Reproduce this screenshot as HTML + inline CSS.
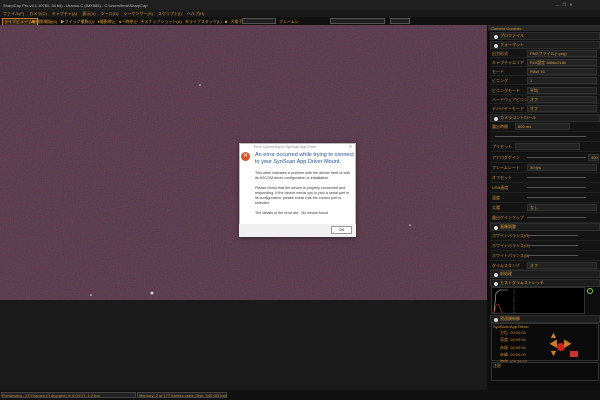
<!DOCTYPE html><html><head><meta charset="utf-8"><style>
*{margin:0;padding:0;box-sizing:border-box}
body{width:600px;height:400px;overflow:hidden;background:#1b1b1b;font-family:"Liberation Sans","Noto Sans CJK JP",sans-serif;position:relative;color:#d89a3a}
.a{position:absolute}
.t{font-size:4px;white-space:nowrap}
.row{position:absolute;left:490px;width:110px;height:9px;background:#141414;border-bottom:1px solid #222}
.lbl{position:absolute;left:2px;top:2px;font-size:4px;color:#d8923a;white-space:nowrap}
.fld{position:absolute;left:37px;right:3px;top:1px;height:7px;background:#222;border:1px solid #333;font-size:4px;color:#d8a050;padding-left:2px;line-height:5px}
.hdr{position:absolute;left:490px;width:110px;height:8px;background:#1e1e1e;border:1px solid #2e2e2e;font-size:4px;color:#e0a040;line-height:6px;padding-left:9px}
.hdr:before{content:"";position:absolute;left:3px;top:1.5px;width:4px;height:4px;border-radius:50%;background:#ddd}
.sl{position:absolute;left:37px;right:14px;top:4px;height:1px;background:#555}
</style></head><body>
<div class="a" style="left:0;top:0;width:600px;height:10px;background:#202020"></div>
<div class="a t" style="left:3px;top:3px;color:#bbb">SharpCap Pro v4.1.10780, 64 bit) - Uranus-C (IMX585) - C:\Users\fmsl\SharpCap</div>
<div class="a t" style="left:555px;top:2px;color:#aaa">—&nbsp;&nbsp;&nbsp;❐&nbsp;&nbsp;&nbsp;✕</div>
<div class="a" style="left:0;top:10px;width:600px;height:7px;background:#1a1a1a"></div>
<div class="a t" style="left:3px;top:11px;color:#d89a3a;word-spacing:4px">ファイル(F) カメラ(C) キャプチャ(A) 表示(V) ツール(O) シーケンサー(S) スクリプト(I) ヘルプ(H)</div>
<div class="a" style="left:0;top:17px;width:600px;height:8px;background:#111"></div>
<div class="a t" style="left:2px;top:18px;background:#3a2a18;border:1px solid #c07a2a;color:#e0a040;padding:0 1px">ライブビュー (W)</div>
<div class="a t" style="left:32px;top:19px;color:#d89a3a;word-spacing:2px">▶撮影開始(S) ▶クイック撮影(Q) ●撮影停止 ●一時停止 ▣スナップショット(A) ▣ライブスタック(L) ■ 大格子</div>
<div class="a" style="left:242px;top:18px;width:34px;height:6px;background:#222;border:1px solid #555"></div>
<div class="a t" style="left:279px;top:19px;">フレームレ</div>
<div class="a" style="left:330px;top:18px;width:55px;height:6px;background:#222;border:1px solid #555"></div>
<div class="a" style="left:390px;top:18px;width:20px;height:6px;background:#222;border:1px solid #555"></div>
<div class="a" style="left:0;top:25px;width:487px;height:275px;background:#3e2130;overflow:hidden">
<svg width="487" height="275"><filter id="n"><feTurbulence type="fractalNoise" baseFrequency="0.9" numOctaves="1" seed="3"/><feColorMatrix values="0.5 0 0 0 0.02  0 0.3 0 0 0.0  0 0 0.4 0 0.02  0 0 0 0 0.4"/></filter><rect width="487" height="275" filter="url(#n)"/>
<circle cx="152" cy="268" r="1.3" fill="#fff"/><circle cx="91" cy="270" r=".8" fill="#eee"/><circle cx="300" cy="120" r=".8" fill="#ddd"/><circle cx="200" cy="60" r=".8" fill="#ddd"/><circle cx="410" cy="200" r=".8" fill="#ddd"/></svg></div>
<div class="a" style="left:0;top:390px;width:600px;height:10px;background:#111"></div>
<div class="a" style="left:1px;top:392px;width:135px;height:6px;border:1px solid #444;background:#222"></div>
<div class="a t" style="left:2px;top:393px;color:#c08838">Previewing : 373 frames (0 dropped) in 0:04:17, 1.2 fps</div>
<div class="a" style="left:137px;top:392px;width:90px;height:6px;border:1px solid #444;background:#222"></div>
<div class="a t" style="left:139px;top:393px;color:#c08838">Memory: 2 of 177 frames used, Disk: 340 GB free</div>
<div class="a" style="left:487px;top:25px;width:113px;height:365px;background:#0e0e0e"></div>
<div class="a" style="left:488px;top:25px;width:112px;height:6px;background:#2a2a2a"></div>
<div class="a t" style="left:491px;top:26px;color:#d89a3a">Camera Controls</div>
<div class="hdr" style="top:32px">プロファイル</div>
<div class="hdr" style="top:41px">フォーマット</div>
<div class="row" style="top:49px"><span class="lbl">出力形式</span><span class="fld">PNGファイル(*.png)</span></div>
<div class="row" style="top:58px"><span class="lbl">キャプチャエリア</span><span class="fld">ROI設定 3856x2180</span></div>
<div class="row" style="top:67px"><span class="lbl">モード</span><span class="fld">RAW 16</span></div>
<div class="row" style="top:76px"><span class="lbl">ビニング</span><span class="fld">1</span></div>
<div class="row" style="top:86px"><span class="lbl">ビニングモード</span><span class="fld">平均</span></div>
<div class="row" style="top:95px"><span class="lbl">ハードウェアビニング</span><span class="fld">オフ</span></div>
<div class="row" style="top:104px"><span class="lbl">デバイヤーモード</span><span class="fld">オフ</span></div>
<div class="hdr" style="top:114px">カメラコントロール</div>
<div class="row" style="top:122px;height:10px"><span class="lbl">露出時間</span><span class="fld" style="left:25px;right:30px">800 ms</span></div>
<div class="row" style="top:132px;height:10px"><span class="sl" style="left:5px"></span></div>
<div class="row" style="top:142px;height:10px"><span class="lbl">プリセット</span><span class="fld" style="left:25px;right:20px"></span></div>
<div class="row" style="top:153px;height:10px"><span class="lbl">アナログゲイン</span><span class="sl"></span><span class="fld" style="left:98px;right:1px">400</span></div>
<div class="row" style="top:163px;height:10px"><span class="lbl">フレームレート</span><span class="fld">30 fps</span></div>
<div class="row" style="top:173px;height:10px"><span class="lbl">オフセット</span><span class="sl"></span></div>
<div class="row" style="top:183px;height:10px"><span class="lbl">USB速度</span><span class="sl"></span></div>
<div class="row" style="top:193px;height:10px"><span class="lbl">温度</span><span class="sl"></span></div>
<div class="row" style="top:203px;height:10px"><span class="lbl">太陽</span><span class="fld">なし</span></div>
<div class="row" style="top:213px;height:10px"><span class="lbl">露出ゲインマップ</span><span class="sl"></span></div>
<div class="hdr" style="top:223px">画像調整</div>
<div class="row" style="top:231px;height:10px"><span class="lbl">ホワイトバランス(R)</span><span class="sl" style="right:22px"></span></div>
<div class="row" style="top:241px;height:10px"><span class="lbl">ホワイトバランス(G)</span><span class="sl" style="right:22px"></span></div>
<div class="row" style="top:251px;height:10px"><span class="lbl">ホワイトバランス(B)</span><span class="sl" style="right:22px"></span></div>
<div class="row" style="top:261px;height:9px"><span class="lbl">タイムスタンプ</span><span class="fld">オフ</span></div>
<div class="hdr" style="top:270px">前処理</div>
<div class="hdr" style="top:279px">ヒストグラムストレッチ</div>
<div class="a" style="left:491px;top:287px;width:94px;height:27px;background:#000;border:1px solid #333"></div>
<svg class="a" style="left:492px;top:288px" width="92" height="25"><path d="M2 25 L4 5 L8 2 L16 2" stroke="#cc8" fill="none" stroke-width=".6"/><path d="M2 25 Q5 10 8 20 T16 25" stroke="#c33" fill="none" stroke-width=".6"/><path d="M22 2 V25" stroke="#6a4" stroke-dasharray="1 1" stroke-width=".5"/></svg>
<div class="a" style="left:587px;top:288px;width:6px;height:6px;border-radius:50%;border:1px solid #8c4"></div>
<div class="hdr" style="top:315px">望遠鏡制御</div>
<div class="a" style="left:491px;top:323px;width:108px;height:38px;background:#0b0b0b;border:1px solid #333"></div>
<div class="a t" style="left:493px;top:324px;color:#e0a040">SynScan App Driver</div>
<div class="a t" style="left:500px;top:329px;line-height:7.3px;color:#c88a38">方位 &nbsp;00:00:00<br>高度 &nbsp;00:00:00<br>赤経 &nbsp;00:00:00<br>赤緯 &nbsp;00:00:00<br>時角 +05:38:00</div>
<div class="a" style="left:557px;top:343px;width:8px;height:8px;border-radius:50%;background:#c22"></div>
<div class="a t" style="left:549px;top:331px;color:#c8802a;font-size:9px;line-height:9px">▲<br>◀&nbsp;&nbsp;▶<br>▼</div>
<div class="a" style="left:570px;top:351px;width:8px;height:6px;background:#c33"></div>
<div class="a" style="left:491px;top:362px;width:108px;height:19px;background:#0b0b0b;border:1px solid #333"></div>
<div class="a t" style="left:493px;top:363px">注釈</div>
<div class="a" style="left:239px;top:143px;width:117px;height:94px;background:#fff;border:1px solid #bbb;box-shadow:0 1px 4px rgba(0,0,0,.5)"></div>
<div class="a t" style="left:254px;top:145px;color:#888;font-size:3.5px">Error Connecting to SynScan App Driver</div>
<div class="a t" style="left:349px;top:144px;color:#888">✕</div>
<div class="a" style="left:241px;top:152px;width:9px;height:9px;border-radius:50%;background:#d4562a;color:#fff;font-size:6px;line-height:9px;text-align:center">✕</div>
<div class="a" style="left:255px;top:152px;font-size:5.5px;line-height:6.5px;color:#1f4e9a;width:100px">An error occurred while trying to connect to your SynScan App Driver Mount.</div>
<div class="a" style="left:255px;top:171px;font-size:3.7px;line-height:5px;color:#333;width:98px">This often indicates a problem with the device itself or with its ASCOM driver configuration or installation.<br><br>Please check that the device is properly connected and responding. If the device needs you to pick a serial port in its configuration, please check that the correct port is selected.<br><br>The details of the error are : No device found</div>
<div class="a" style="left:239px;top:224px;width:117px;height:13px;background:#f0f0f0"></div>
<div class="a" style="left:331px;top:226px;width:21px;height:8px;border:1px solid #999;background:#fdfdfd;font-size:4px;text-align:center;line-height:6px;color:#222">OK</div>
</body></html>
